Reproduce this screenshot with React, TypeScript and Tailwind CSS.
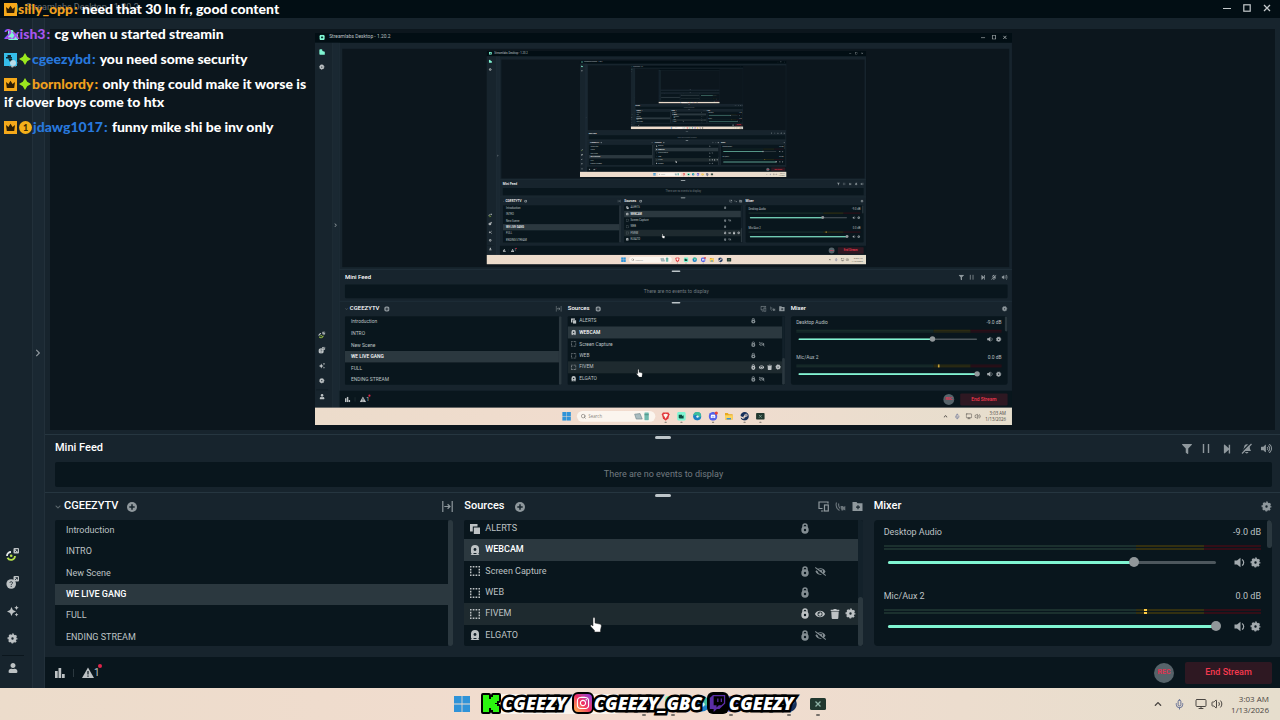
import type { ReactNode } from 'react';
import {
  FaChevronDown,
  FaChevronRight,
  FaChevronUp,
  FaDiscord,
  FaEye,
  FaEyeSlash,
  FaFilter,
  FaInstagram,
  FaStepForward,
  FaSteam,
  FaTrash,
  FaTwitch,
  FaUser,
  FaVolumeUp,
} from 'react-icons/fa';
import { LuMic, LuMonitor, LuSearch, LuVolume2 } from 'react-icons/lu';

// How many times the captured screen shows up inside itself
const MAX_DEPTH = 5;

const SCENES = ['Introduction', 'INTRO', 'New Scene', 'WE LIVE GANG', 'FULL', 'ENDING STREAM'];

type Source = {
  name: string;
  kind: 'alerts' | 'camera' | 'capture';
  selected?: boolean;
  hovered?: boolean;
  hidden?: boolean;
};

const SOURCES: Source[] = [
  { name: 'ALERTS', kind: 'alerts' },
  { name: 'WEBCAM', kind: 'camera', selected: true },
  { name: 'Screen Capture', kind: 'capture', hidden: true },
  { name: 'WEB', kind: 'capture' },
  { name: 'FIVEM', kind: 'capture', hovered: true },
  { name: 'ELGATO', kind: 'camera', hidden: true },
];

export default function App() {
  return (
    <div className="relative h-screen min-h-[560px] w-full overflow-hidden">
      <Desktop depth={0} />
      <Chat />
      <Socials />
    </div>
  );
}

function Desktop({ depth }: { depth: number }) {
  return (
    <div className="relative flex h-full w-full flex-col bg-[#17242d] font-[Roboto,sans-serif] text-[9px] text-[#bdc2c4]">
      <TitleBar dim={depth === 0} />
      <div className="flex min-h-0 flex-1">
        <SideNav />
        <button
          aria-label="Expand live dock"
          className="flex w-[13px] shrink-0 items-center justify-center border-x border-[#22303a] bg-[#1a2832] pr-px text-[#8f989d]"
        >
          <FaChevronRight className="h-2 w-2" />
        </button>
        <div className="flex min-w-0 flex-1 flex-col">
          <div className="min-h-0 flex-1 px-[5px] pt-[11px] pb-1">
            <div className="flex h-full items-center justify-center overflow-hidden bg-[#0c161d] pb-[2px] pl-[2px]">
              {depth < MAX_DEPTH && <Preview depth={depth + 1} />}
            </div>
          </div>
          <MiniFeed />
          <section className="relative grid h-[165px] shrink-0 grid-cols-3 gap-[11px] border-t border-[#263640] pr-2 pl-[10px]">
            <Handle />
            <Scenes />
            <Sources />
            <Mixer />
          </section>
          <Footer />
        </div>
      </div>
      <Taskbar />
    </div>
  );
}

// The program canvas: a full 1280x720 desktop shown at preview size
function Preview({ depth }: { depth: number }) {
  return (
    <div inert aria-hidden className="h-[392px] w-[697px] shrink-0 overflow-hidden">
      <div className="h-[720px] w-[1280px] origin-top-left scale-[0.5445]">
        <Desktop depth={depth} />
      </div>
    </div>
  );
}

function TitleBar({ dim }: { dim: boolean }) {
  return (
    <header className="flex h-[18px] shrink-0 items-center justify-between bg-[#020e14] pr-[9px] pb-[3px] pl-[8px]">
      <div className={dim ? 'flex items-center gap-2 opacity-50' : 'flex items-center gap-2'}>
        <svg viewBox="0 0 10 10" className="h-[10px] w-[10px]">
          <rect width="10" height="10" rx="3" fill="#80f5d2" />
          <rect x="3" y="3.4" width="4" height="3.2" rx="1" fill="#0d3d36" />
        </svg>
        <span>Streamlabs Desktop - 1.20.2</span>
      </div>
      <div className="flex items-center gap-[12px] text-[#c5cacc]">
        <button aria-label="Minimize">
          <svg viewBox="0 0 8 8" className="h-2 w-2" stroke="currentColor">
            <path d="M0 4.5h8" />
          </svg>
        </button>
        <button aria-label="Maximize">
          <svg viewBox="0 0 8 8" className="h-2 w-2" fill="none" stroke="currentColor" strokeWidth="1.2">
            <rect x=".8" y=".8" width="6.4" height="6.4" />
          </svg>
        </button>
        <button aria-label="Close">
          <svg viewBox="0 0 8 8" className="h-2 w-2" stroke="currentColor" strokeWidth="1.3">
            <path d="M1 1l6 6M7 1L1 7" />
          </svg>
        </button>
      </div>
    </header>
  );
}

function SideNav() {
  return (
    <nav className="flex w-8 shrink-0 flex-col justify-between bg-[#17242d] pt-[10px] pb-[14px] pl-[6px] text-[#bdc2c4]">
      <div className="flex flex-col gap-[15px]">
        <NavButton label="Editor">
          <svg viewBox="0 0 12 12" className="h-3 w-3" fill="#80f5d2">
            <path d="M1 2.5A1.5 1.5 0 0 1 2.5 1H5a1.5 1.5 0 0 1 1.500 1.500V4l4.500 1.500V11H2.500A1.500 1.500 0 0 1 1 9.500z" />
          </svg>
        </NavButton>
        <NavButton label="Layout">
          <GearIcon />
        </NavButton>
      </div>
      <div className="flex flex-col">
        <div className="flex flex-col gap-[15px]">
          <NavButton label="Highlighter">
            <svg viewBox="0 0 13 13" className="h-[13px] w-[13px]" fill="none">
              <path d="M1 8a4 4 0 0 1 4-4" stroke="#e7ebec" strokeWidth="1.800" />
              <path d="M9 8a4 4 0 0 1-7.500 1.800" stroke="#b6e04b" strokeWidth="1.800" />
              <circle cx="5.200" cy="7.800" r="1.300" fill="#b6e04b" />
              <rect x="7.500" y="0" width="5.500" height="5.500" rx="1" fill="#bdc2c4" />
              <path d="M9 4l2.300-2.300M9.500 1.600h2v2" stroke="#17242d" strokeWidth=".8" />
            </svg>
          </NavButton>
          <NavButton label="Help">
            <svg viewBox="0 0 13 13" className="h-[13px] w-[13px]" fill="none">
              <circle cx="5.200" cy="8" r="4.800" fill="#bdc2c4" />
              <path d="M3.800 6.700c.3-1.500 3-1.200 2.700.3C6.300 8 5.200 7.900 5.200 9.200M5.200 10v1" stroke="#17242d" strokeWidth=".9" />
              <rect x="7.500" y="0" width="5.500" height="5.500" rx="1" fill="#bdc2c4" />
              <path d="M9 4l2.300-2.300M9.500 1.600h2v2" stroke="#17242d" strokeWidth=".8" />
            </svg>
          </NavButton>
          <NavButton label="AI">
            <svg viewBox="0 0 12 12" className="h-3 w-3" fill="currentColor">
              <path d="M4.500 2L5.900 5.100 9 6.500 5.900 7.900 4.500 11 3.100 7.900 0 6.500 3.100 5.100z" />
              <path d="M9.500.5l.7 1.500 1.500.7-1.500.7-.7 1.500-.7-1.500-1.500-.7 1.500-.7zM9.500 7.800l.6 1.300 1.300.6-1.300.6-.6 1.300-.6-1.300-1.300-.6 1.300-.6z" />
            </svg>
          </NavButton>
          <NavButton label="Settings">
            <GearIcon />
          </NavButton>
        </div>
        <div className="mt-[10px] mr-2 mb-[5px] -ml-1 border-t border-[#0b161d]" />
        <NavButton label="Account">
          <FaUser className="h-[10px] w-[10px]" />
        </NavButton>
      </div>
    </nav>
  );
}

function NavButton({ label, children }: { label: string; children: ReactNode }) {
  return (
    <button aria-label={label} className="flex h-[13px] w-[13px] items-center justify-center">
      {children}
    </button>
  );
}

function Handle() {
  return <div className="absolute top-px left-1/2 h-[3px] w-4 -translate-x-1/2 rounded-full bg-[#bdc5c9]" />;
}

function MiniFeed() {
  return (
    <section className="relative h-[58px] shrink-0 border-t border-[#263640] pr-2 pl-[10px]">
      <Handle />
      <div className="flex h-[27px] items-center justify-between">
        <h2 className="text-[11px] font-medium text-white">Mini Feed</h2>
        <div className="flex items-center gap-[9px] text-[#8f989d]">
          <IconButton label="Filter">
            <FaFilter className="h-[10px] w-[10px]" />
          </IconButton>
          <IconButton label="Pause queue">
            <svg viewBox="0 0 11 11" className="h-[11px] w-[11px]" stroke="currentColor" strokeWidth="1.400">
              <path d="M2.500 1v9M7.500 1v9" />
            </svg>
          </IconButton>
          <IconButton label="Skip alert">
            <FaStepForward className="h-[10px] w-[10px]" />
          </IconButton>
          <IconButton label="Mute alerts">
            <svg viewBox="0 0 11 11" className="h-[11px] w-[11px]" fill="currentColor">
              <path d="M3.500 2.500A3 3 0 0 1 8.500 2.500L9 6l1 2H1l1.500-2z" />
              <path d="M4 9h3.500a1.800 1.800 0 0 1-3.500 0z" />
              <path d="M.5 9L9.500 0" stroke="#17242d" strokeWidth="1.400" />
              <path d="M1 10.500L10.500 1" stroke="currentColor" strokeWidth="1.200" />
            </svg>
          </IconButton>
          <IconButton label="Volume">
            <FaVolumeUp className="h-[11px] w-[11px]" />
          </IconButton>
        </div>
      </div>
      <p className="flex h-[25px] items-center justify-center rounded-xs bg-[#09161d] text-[#727b80]">
        There are no events to display
      </p>
    </section>
  );
}

function IconButton({ label, children }: { label: string; children: ReactNode }) {
  return (
    <button aria-label={label} className="flex h-[11px] w-[11px] items-center justify-center">
      {children}
    </button>
  );
}

function AddButton({ label }: { label: string }) {
  return (
    <button aria-label={label} className="text-[#8f989d]">
      <svg viewBox="0 0 10 10" className="h-[10px] w-[10px]">
        <circle cx="5" cy="5" r="5" fill="currentColor" />
        <path d="M5 2.300v5.400M2.300 5h5.400" stroke="#17242d" strokeWidth="1.500" />
      </svg>
    </button>
  );
}

function Scenes() {
  return (
    <div className="min-w-0">
      <div className="flex h-[27px] items-center">
        <button className="flex items-center gap-[3px] text-[11px] font-medium text-white">
          <FaChevronDown className="h-[6px] w-[6px] text-[#5d686e]" />
          CGEEZYTV
        </button>
        <div className="ml-[9px] flex">
          <AddButton label="Add scene" />
        </div>
        <button aria-label="Scene transitions" className="ml-auto text-[#8f989d]">
          <svg viewBox="0 0 11 11" className="h-[11px] w-[11px]" fill="none" stroke="currentColor" strokeWidth="1.200">
            <path d="M.8 0v11M10.200 0v11M2.300 5.500h5.400M5.600 3.200L8 5.500 5.600 7.800" />
          </svg>
        </button>
      </div>
      <div className="flex h-[126px] overflow-hidden rounded-xs">
        <ul className="grid h-32 flex-1 grid-rows-6 bg-[#09161d]">
          {SCENES.map((scene) => (
            <li
              key={scene}
              className={
                scene === 'WE LIVE GANG'
                  ? 'flex items-center bg-[#2b383f] pl-[11px] font-medium text-white'
                  : 'flex items-center pl-[11px]'
              }
            >
              {scene}
            </li>
          ))}
        </ul>
        <div className="w-[5px] rounded-full bg-[#2b383f]" />
      </div>
    </div>
  );
}

function Sources() {
  return (
    <div className="min-w-0">
      <div className="flex h-[27px] items-center">
        <h2 className="text-[11px] font-medium text-white">Sources</h2>
        <div className="ml-[11px] flex">
          <AddButton label="Add source" />
        </div>
        <div className="ml-auto flex items-center gap-[6px] text-[#8f989d]">
          <IconButton label="Dual output">
            <svg viewBox="0 0 11 11" className="h-[11px] w-[11px]" fill="none" stroke="currentColor" strokeWidth="1.200">
              <path d="M10 2.500V1H1v6.500h3.500M3 10h2.500" />
              <rect x="6.500" y="4" width="3.800" height="6" />
            </svg>
          </IconButton>
          <IconButton label="Guest cam">
            <svg viewBox="0 0 11 11" className="h-[11px] w-[11px] opacity-70" fill="none" stroke="currentColor" strokeWidth="1.100">
              <path d="M1.500 1.500a7 7 0 0 0 3 8M3.800 2.500a5 5 0 0 0 1.500 5" />
              <path d="M5.500 5h2.800v1l2-1v4.500l-2-1v1H6.500z" fill="currentColor" stroke="none" />
            </svg>
          </IconButton>
          <IconButton label="Add folder">
            <svg viewBox="0 0 11 11" className="h-[11px] w-[11px]">
              <path d="M.5 1h4l1 1.300h5V10H.5z" fill="currentColor" />
              <path d="M6 4.200v4M4 6.200h4" stroke="#17242d" strokeWidth="1.200" />
            </svg>
          </IconButton>
        </div>
      </div>
      <div className="flex h-[126px] items-end overflow-hidden rounded-xs bg-[#09161d]">
        <ul className="grid h-32 flex-1 grid-rows-6">
          {SOURCES.map((source) => (
            <SourceRow key={source.name} source={source} />
          ))}
        </ul>
        <div className="flex h-full w-[5px] items-end bg-[#13212a]">
          <div className="h-[49px] w-full rounded-full bg-[#2b383f]" />
        </div>
      </div>
    </div>
  );
}

function SourceRow({ source }: { source: Source }) {
  const { name, kind, selected, hovered, hidden } = source;
  return (
    <li
      className={
        selected
          ? 'flex items-center bg-[#2b383f] pl-[6px] font-medium text-white'
          : hovered
            ? 'flex items-center bg-[#1e2a2f] pl-[6px]'
            : 'flex items-center pl-[6px]'
      }
    >
      <SourceIcon kind={kind} />
      <span className="ml-[5px] flex-1">{name}</span>
      {!selected && (
        <span
          className={
            hovered
              ? 'grid w-[60px] grid-cols-4 justify-items-center'
              : 'grid w-[60px] grid-cols-4 justify-items-center text-[#838d92]'
          }
        >
          <IconButton label={`Unlock ${name}`}>
            <svg viewBox="0 0 10 11" className="h-[11px] w-[10px]">
              <path d="M3 5V3a2 2 0 0 1 4 0v2" fill="none" stroke="currentColor" strokeWidth="1.500" />
              <circle cx="5" cy="7" r="3.700" fill="currentColor" />
              <circle cx="5" cy="7" r="1.200" fill="#09161d" />
            </svg>
          </IconButton>
          {hidden && (
            <IconButton label={`Show ${name}`}>
              <FaEyeSlash className="h-[11px] w-[11px]" />
            </IconButton>
          )}
          {hovered && (
            <>
              <IconButton label={`Hide ${name}`}>
                <FaEye className="h-[10px] w-[10px]" />
              </IconButton>
              <IconButton label={`Remove ${name}`}>
                <FaTrash className="h-[10px] w-[10px]" />
              </IconButton>
              <IconButton label={`${name} settings`}>
                <GearIcon />
              </IconButton>
            </>
          )}
        </span>
      )}
    </li>
  );
}

function SourceIcon({ kind }: { kind: Source['kind'] }) {
  if (kind === 'alerts') {
    return (
      <svg viewBox="0 0 10 10" className="h-[10px] w-[10px]" fill="currentColor">
        <path d="M0 0h7.500v2.500H2.800v5H0z" />
        <path d="M3.800 3.500H10V10H3.800z" />
      </svg>
    );
  }
  if (kind === 'camera') {
    return (
      <svg viewBox="0 0 10 10" className="h-[10px] w-[10px] text-[#bdc2c4]">
        <path
          d="M5 0a4 4 0 0 1 4 4v3.500a2 2 0 0 1-.8 1.300L9.500 10h-9l1.300-1.200A2 2 0 0 1 1 7.500V4a4 4 0 0 1 4-4z"
          fill="currentColor"
        />
        <circle cx="5" cy="4.500" r="1.400" fill="#17242d" />
        <path d="M3.500 8.500h3" stroke="#17242d" />
      </svg>
    );
  }
  return (
    <svg viewBox="0 0 10 10" className="h-[10px] w-[10px]" fill="none">
      <rect
        x=".7"
        y=".7"
        width="8.600"
        height="8.600"
        stroke="currentColor"
        strokeWidth="1.400"
        strokeDasharray="1.700 1.170"
        strokeDashoffset=".85"
      />
    </svg>
  );
}

function Mixer() {
  return (
    <div className="min-w-0">
      <div className="flex h-[27px] items-center justify-between text-[#8f989d]">
        <h2 className="text-[11px] font-medium text-white">Mixer</h2>
        <IconButton label="Mixer settings">
          <GearIcon />
        </IconButton>
      </div>
      <div className="relative h-[126px] overflow-hidden rounded-sm bg-[#09161d] pr-[11px] pl-[10px]">
        <Channel name="Desktop Audio" level="-9.0 dB" value={75} />
        <Channel name="Mic/Aux 2" level="0.0 dB" value={100} peak={69} />
        <div className="absolute top-0 right-0 h-7 w-[5px] rounded-full bg-[#2b383f]" />
      </div>
    </div>
  );
}

function Channel({
  name,
  level,
  value,
  peak,
}: {
  name: string;
  level: string;
  value: number;
  peak?: number;
}) {
  return (
    <div className="h-16 pt-[6px]">
      <div className="flex h-[14px] items-center justify-between">
        <span>{name}</span>
        <span>{level}</span>
      </div>
      <div className="relative mt-[5px] flex flex-col gap-px">
        <Meter />
        <Meter />
        {peak !== undefined && (
          <div className="absolute top-0 flex h-full w-[3px] flex-col gap-px" style={{ left: `${peak}%` }}>
            <div className="flex-1 bg-[#ffcd47]" />
            <div className="flex-1 bg-[#ffcd47]" />
          </div>
        )}
      </div>
      <div className="mt-[5px] flex h-[14px] items-center">
        <div className="relative ml-1 flex h-[10px] flex-1 items-center">
          <div className="h-[3px] w-full rounded-full bg-[#4d575d]">
            <div className="h-full rounded-full bg-[#80f5d2]" style={{ width: `${value}%` }} />
          </div>
          <input
            type="range"
            aria-label={`${name} volume`}
            defaultValue={value}
            className="absolute inset-y-0 -left-[5px] h-[10px] w-[calc(100%+10px)] appearance-none bg-transparent [&::-webkit-slider-thumb]:h-[10px] [&::-webkit-slider-thumb]:w-[10px] [&::-webkit-slider-thumb]:appearance-none [&::-webkit-slider-thumb]:rounded-full [&::-webkit-slider-thumb]:bg-[#91979a]"
          />
        </div>
        <div className="ml-[18px] flex items-center gap-[5px] text-[#a3aaae]">
          <IconButton label={`Mute ${name}`}>
            <svg viewBox="0 0 11 11" className="h-[11px] w-[11px]" fill="currentColor">
              <path d="M.5 3.500h2.500L6.500.8v9.400L3 7.500H.5z" />
              <path d="M8 2.500a3.500 3.500 0 0 1 0 6" fill="none" stroke="currentColor" strokeWidth="1.200" />
            </svg>
          </IconButton>
          <IconButton label={`${name} settings`}>
            <GearIcon />
          </IconButton>
        </div>
      </div>
    </div>
  );
}

function Meter() {
  return (
    <div className="flex h-[2px]">
      <div className="w-[67%] bg-[#1b302e]" />
      <div className="w-[18%] bg-[#333011]" />
      <div className="flex-1 bg-[#320e17]" />
    </div>
  );
}

function Footer() {
  return (
    <footer className="flex h-[31px] shrink-0 items-center justify-between bg-[#09161d] pr-2 pl-[10px]">
      <div className="flex items-center">
        <button aria-label="Performance">
          <svg viewBox="0 0 10 10" className="h-[10px] w-[10px]" fill="currentColor">
            <path d="M0 3h2.700v7H0zM3.500 0h2.700v10H3.500zM7 6h2.700v4H7z" />
          </svg>
        </button>
        <div className="mx-2 h-2 border-l border-[#2b383f]" />
        <button className="relative flex items-center text-[10px]">
          <svg viewBox="0 0 12 11" className="h-[11px] w-3">
            <path d="M6 .5L12 11H0z" fill="currentColor" />
            <path d="M6 4v3.500M6 8.500v1.300" stroke="#09161d" strokeWidth="1.200" />
          </svg>
          1
          <span className="absolute -top-px -right-[2px] h-1 w-1 rounded-full bg-[#e0244a]" />
        </button>
      </div>
      <div className="flex items-center gap-[11px]">
        <button className="h-5 w-5 rounded-full bg-[#56636a] text-[7px] font-bold text-[#e03350]">REC</button>
        <button className="h-[22px] w-[87px] rounded-xs bg-[#2e1822] font-medium text-[#f5384f]">End Stream</button>
      </div>
    </footer>
  );
}

function Taskbar() {
  return (
    <div className="relative flex h-8 shrink-0 items-center justify-center bg-linear-to-r from-[#ecdccb] via-[#f2dccf] to-[#e6decd] font-['Open_Sans',sans-serif] text-[8px] text-[#4a4642]">
      <div className="flex items-center gap-[11px]">
        <button aria-label="Start">
          <svg viewBox="0 0 16 16" className="h-4 w-4" fill="#2f93d8">
            <path d="M0 0h7.600v7.600H0zM8.400 0H16v7.600H8.400zM0 8.400h7.600V16H0zM8.400 8.400H16V16H8.400z" />
          </svg>
        </button>
        <label className="flex h-5 w-36 items-center gap-1 rounded-full bg-[#fbf5ee] px-[7px]">
          <LuSearch className="h-[10px] w-[10px]" />
          <input
            type="search"
            placeholder="Search"
            aria-label="Search"
            className="w-20 bg-transparent outline-none placeholder:text-[#8a857f]"
          />
          <svg viewBox="0 0 30 16" className="h-4 w-[30px] shrink-0">
            <path d="M1 4l10-1 4 10H4z" fill="#a9bcc0" stroke="#617a80" />
            <rect x="19" y="1" width="8" height="14" rx="1" fill="#6fb9ad" />
            <path d="M19 5h8" stroke="#3b7069" />
          </svg>
        </label>
        <div className="flex items-center gap-[13px]">
          <TaskIcon label="Brave" running>
            <svg viewBox="0 0 16 16" className="h-4 w-4">
              <path d="M3 1h10l2 3-2 8-5 4-5-4-2-8z" fill="#e2373b" />
              <path d="M4.500 4l3.500-.7 3.500.7.8 1.500L10 9l-2 3.500L6 9 3.700 5.500z" fill="#fbf5ee" />
            </svg>
          </TaskIcon>
          <TaskIcon label="Streamlabs Desktop" running>
            <svg viewBox="0 0 16 16" className="h-4 w-4">
              <rect width="16" height="16" rx="3" fill="#80f5d2" />
              <path d="M3 5h6v2.500l3-1.500v6H4.500L3 10.500z" fill="#0d4a3d" />
            </svg>
          </TaskIcon>
          <TaskIcon label="Edge">
            <svg viewBox="0 0 16 16" className="h-4 w-4">
              <circle cx="8" cy="8" r="7.500" fill="#1b7fc4" />
              <path d="M1 7a7 7 0 0 1 14 0c0 3-5 3.500-6 1.500C9 5.500 4.500 4.500 1 7z" fill="#3ebd9c" />
              <circle cx="8.500" cy="8.500" r="2.200" fill="#e4f4f4" />
            </svg>
          </TaskIcon>
          <TaskIcon label="Discord" running>
            <svg viewBox="0 0 16 16" className="h-4 w-4">
              <circle cx="8" cy="8" r="8" fill="#5461e8" />
            </svg>
            <FaDiscord className="absolute top-[3px] left-[3px] h-[10px] w-[10px] text-white" />
            <span className="absolute -top-px -right-px h-[6px] w-[6px] rounded-full bg-[#e8453c]" />
          </TaskIcon>
          <TaskIcon label="File Explorer">
            <svg viewBox="0 0 16 16" className="h-4 w-4">
              <path d="M1 2h5l2 2h7v10H1z" fill="#e8a91f" />
              <path d="M1 6h14v8H1z" fill="#fcd45c" />
              <path d="M4 11h8v3H4z" fill="#3d8fd6" />
            </svg>
          </TaskIcon>
          <TaskIcon label="Steam" running>
            <FaSteam className="h-4 w-4 text-[#16305a]" />
          </TaskIcon>
          <TaskIcon label="Game" running>
            <svg viewBox="0 0 16 16" className="h-4 w-4">
              <rect y="2" width="16" height="12" rx="1.500" fill="#21382f" />
              <path d="M5.500 5.500l5 5M10.500 5.500l-5 5" stroke="#8fb3a6" strokeWidth="1.300" />
            </svg>
          </TaskIcon>
        </div>
      </div>
      <div className="absolute right-[11px] flex items-center">
        <FaChevronUp className="h-2 w-2" />
        <LuMic className="ml-3 h-[11px] w-[11px] text-[#5b6791]" />
        <LuMonitor className="ml-[10px] h-3 w-3" />
        <LuVolume2 className="ml-1 h-3 w-3" />
        <div className="ml-2 text-right leading-[11px]">
          <div>3:03 AM</div>
          <div>1/13/2026</div>
        </div>
      </div>
      <Cursor />
    </div>
  );
}

function TaskIcon({ label, running, children }: { label: string; running?: boolean; children: ReactNode }) {
  return (
    <button aria-label={label} className="relative">
      {children}
      {running && <span className="absolute -bottom-1 left-[6px] h-[2px] w-1 rounded-full bg-[#77716b]" />}
    </button>
  );
}

function Cursor() {
  return (
    <svg viewBox="0 0 12 16" className="absolute bottom-[87px] left-[590px] h-4 w-3">
      <path
        d="M3 1.500c0-1.300 2-1.300 2 0V6l4.500 1c1.500.4 2 1 1.800 2.500L10.500 13v2h-6v-1.500L.8 9.500C0 8.300 1.200 7.500 2 8.200l1 .8z"
        fill="#fff"
        stroke="#2b2b2b"
        strokeWidth=".5"
      />
    </svg>
  );
}

function GearIcon() {
  return (
    <svg viewBox="0 0 12 12" className="h-[11px] w-[11px]" fill="none" stroke="currentColor">
      <circle cx="6" cy="6" r="2.900" strokeWidth="3.200" />
      <circle cx="6" cy="6" r="4.700" strokeWidth="1.400" strokeDasharray="2.100 1.590" strokeDashoffset="1.050" />
    </svg>
  );
}

// Chat shown over the stream
function Chat() {
  return (
    <div className="absolute top-0 left-1 flex w-[310px] flex-col gap-[7px] font-[Lato,sans-serif] text-[14px] leading-[18px] font-black text-white">
      <ChatLine name="silly_opp" color="text-[#f0a01e]" badges={<Crown />} text="need that 30 ln fr, good content" />
      <ChatLine name="2xish3" color="text-[#a855f0]" text="cg when u started streamin" />
      <ChatLine
        name="cgeezybd"
        color="text-[#2878dc]"
        badges={
          <>
            <svg viewBox="0 0 13 13" className="h-[13px] w-[13px]">
              <rect width="13" height="13" fill="#35bdea" />
              <path d="M2 4h6v1.500H2zM3.500 2h3.500v2H3.500z" fill="#10262f" />
              <path d="M4 5.500h3.500L10 9H6z" fill="#10262f" />
              <circle cx="9" cy="10" r="3" fill="#b9dcea" />
            </svg>
            <Sparkle />
          </>
        }
        text="you need some security"
      />
      <ChatLine
        name="bornlordy"
        color="text-[#f0a01e]"
        badges={
          <>
            <Crown />
            <Sparkle />
          </>
        }
        text="only thing could make it worse is if clover boys come to htx"
      />
      <ChatLine
        name="jdawg1017"
        color="text-[#2878dc]"
        badges={
          <>
            <Crown />
            <span className="flex h-[13px] w-[13px] items-center justify-center rounded-full bg-[#f5b01a] text-[9px] text-[#3b2a05]">
              1
            </span>
          </>
        }
        text="funny mike shi be inv only"
      />
    </div>
  );
}

function ChatLine({
  name,
  color,
  badges,
  text,
}: {
  name: string;
  color: string;
  badges?: ReactNode;
  text: string;
}) {
  return (
    <p>
      {badges && <span className="mr-px inline-flex gap-[2px] align-[-2px]">{badges}</span>}
      <span className={color}>{name}</span>
      <span className={color}>
        <span className="mx-px">:</span>
      </span>{' '}
      {text}
    </p>
  );
}

function Crown() {
  return (
    <svg viewBox="0 0 13 13" className="h-[13px] w-[13px]">
      <rect width="13" height="13" fill="#f5a91a" />
      <path d="M2 4l2.400 2L6.500 2.800 8.600 6 11 4l-.8 6H2.800z" fill="#2b1d04" />
    </svg>
  );
}

function Sparkle() {
  return (
    <svg viewBox="0 0 12 12" className="h-3 w-3">
      <path d="M6 0l2.200 3.800L12 6 8.200 8.200 6 12 3.800 8.200 0 6l3.800-2.200z" fill="#9be81e" />
    </svg>
  );
}

// Channel handles laid over the taskbar
function Socials() {
  return (
    <div className="absolute bottom-[5px] left-1/2 ml-[-160px] flex h-6 items-center gap-[5px] font-['Open_Sans',sans-serif] text-[18px] leading-6 font-extrabold text-white italic">
      <Social name="CGEEZY">
        {/* Kick logo */}
        <svg viewBox="0 0 22 22" className="h-[22px] w-[22px]">
          <path
            d="M3 3h6v4h2V5h2V3h6v6h-2v2h-2v1h2v2h2v6h-6v-2h-2v-2H9v4H3z"
            fill="#2bf50f"
            stroke="#000"
            strokeWidth="4"
            strokeLinejoin="round"
            className="[paint-order:stroke]"
          />
        </svg>
      </Social>
      <Social name="CGEEZY_GBC">
        <span className="flex h-[22px] w-[22px] items-center justify-center rounded-md border-2 border-black bg-linear-to-tr from-[#fbb040] via-[#f02a62] to-[#8a2be2]">
          <FaInstagram className="h-[14px] w-[14px]" />
        </span>
      </Social>
      <Social name="CGEEZY">
        <span className="flex h-[22px] w-[22px] items-center justify-center rounded-md bg-black">
          <FaTwitch className="h-[17px] w-[17px] text-[#5b2ea6]" />
        </span>
      </Social>
    </div>
  );
}

function Social({ name, children }: { name: string; children: ReactNode }) {
  return (
    <span className="flex items-center">
      {children}
      <span className="[-webkit-text-stroke:5px_black] [paint-order:stroke_fill]">{name}</span>
    </span>
  );
}
